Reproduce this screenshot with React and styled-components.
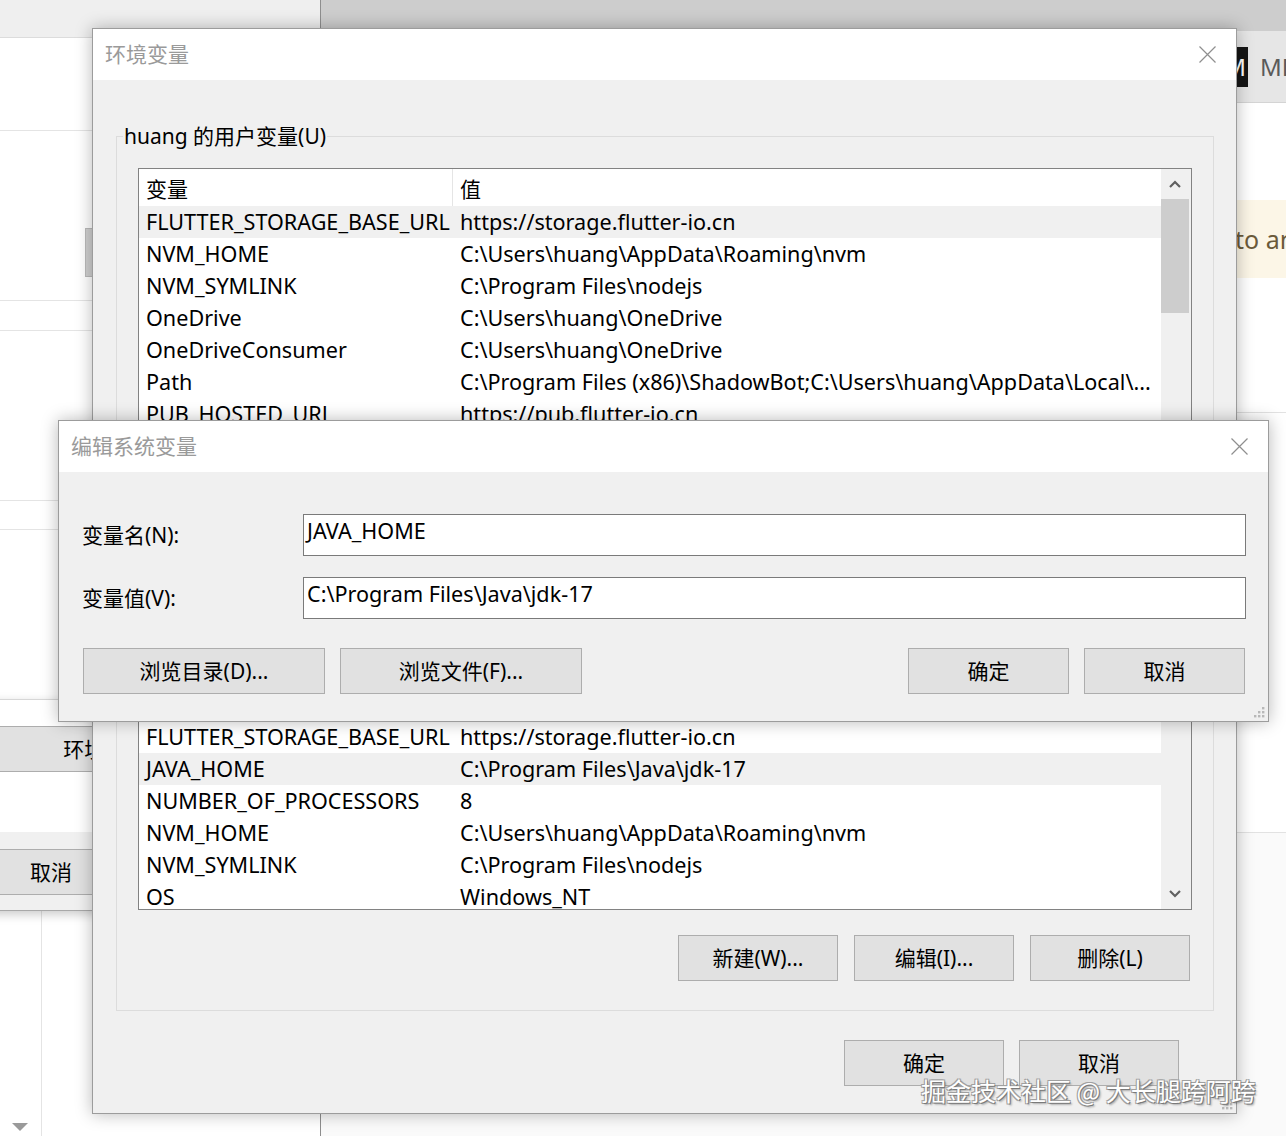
import React from 'react';
import styled, { createGlobalStyle } from 'styled-components';

const GlobalStyle = createGlobalStyle`
  html, body {
    margin: 0;
    padding: 0;
  }
  body {
    background: #fff;
    font-family: "Noto Sans", "Noto Sans CJK SC", sans-serif;
  }
  #root {
    width: 1286px;
    height: 1136px;
  }
`;

const UI_FONT = `"Noto Sans", "Noto Sans CJK SC", sans-serif`;

const Desktop = styled.div`
  position: relative;
  width: 1286px;
  height: 1136px;
  overflow: hidden;
  background: #fff;
  font-family: ${UI_FONT};
`;

/* ---------- background: left app ---------- */

const LeftApp = styled.div`
  position: absolute;
  left: 0;
  top: 0;
  width: 320px;
  height: 1136px;
  background: #fff;
  border-right: 1px solid #8e8e8e;
  display: flex;
  flex-direction: column;
`;

const LeftTopBar = styled.div`
  height: 37px;
  background: #efefef;
  border-bottom: 1px solid #dcdcdc;
`;

const LeftRow = styled.div`
  height: ${(p) => p.$h}px;
  border-bottom: 1px solid #e4e4e4;
`;

const LeftScrollThumb = styled.div`
  position: absolute;
  left: 85px;
  top: 228px;
  width: 6px;
  height: 47px;
  background: #cfcfcf;
  border: 1px solid #b9b9b9;
`;

const LeftFooter = styled.div`
  flex: 1;
  display: flex;
`;

const LeftGutter = styled.div`
  width: 41px;
  display: flex;
  align-items: flex-end;
  justify-content: center;
  padding-bottom: 5px;
  box-sizing: border-box;
`;

const LeftTree = styled.div`
  flex: 1;
  border-left: 1px solid #e4e4e4;
`;

const DownTriangle = styled.div`
  width: 0;
  height: 0;
  border-left: 8px solid transparent;
  border-right: 8px solid transparent;
  border-top: 8px solid #9a9a9a;
  margin-left: -2px;
`;

/* ---------- background: right app ---------- */

const RightApp = styled.div`
  position: absolute;
  left: 321px;
  top: 0;
  width: 965px;
  height: 1136px;
  display: flex;
  flex-direction: column;
  background: #fafafa;
`;

const RightTopBar = styled.div`
  height: 31px;
  background: #cdcdcd;
`;

const RightHeader = styled.div`
  height: 71px;
  background: #e6e6e6;
  border-bottom: 1px solid #d4d4d4;
  display: flex;
  align-items: center;
  padding-left: 897px;
  gap: 12px;
  overflow: hidden;
`;

const MdBadge = styled.div`
  flex: none;
  width: 30px;
  height: 40px;
  background: #151515;
  color: #fff;
  font-size: 24px;
  line-height: 40px;
  text-align: right;
  padding-right: 2px;
  box-sizing: border-box;
  overflow: hidden;
`;

const MdLabel = styled.div`
  flex: none;
  font-size: 24px;
  color: #5a5a5a;
  white-space: nowrap;
`;

const RightBlank = styled.div`
  height: ${(p) => p.$h}px;
  background: #fff;
  border-bottom: ${(p) => (p.$line ? '1px solid #e2e2e2' : 'none')};
`;

const Notice = styled.div`
  height: 78px;
  background: #fcf6e7;
  color: #6b5a3a;
  font-size: 25px;
  display: flex;
  align-items: center;
  padding-left: 914px;
  white-space: nowrap;
  overflow: hidden;
`;

/* ---------- background: system properties window ---------- */

const SysWindow = styled.div`
  position: absolute;
  left: -300px;
  top: 700px;
  width: 600px;
  height: 211px;
  border: 1px solid #a8a8a8;
  border-top: none;
  box-shadow: 0 3px 10px rgba(0, 0, 0, 0.22);
  display: flex;
  flex-direction: column;
  box-sizing: border-box;
`;

const SysPage = styled.div`
  height: 132px;
  background: #fff;
  padding: 26px 0 0 277px;
  box-sizing: border-box;
`;

const SysFooter = styled.div`
  flex: 1;
  background: #f0f0f0;
  padding: 17px 0 0 270px;
`;

/* ---------- shared window parts ---------- */

const Dialog = styled.div`
  position: absolute;
  left: ${(p) => p.$x}px;
  top: ${(p) => p.$y}px;
  width: ${(p) => p.$w}px;
  box-sizing: border-box;
  border: 1px solid #9c9c9c;
  background: #f0f0f0;
  box-shadow: 0 0 16px rgba(0, 0, 0, 0.28);
  display: flex;
  flex-direction: column;
`;

const TitleBar = styled.div`
  height: 51px;
  box-sizing: border-box;
  background: #fff;
  display: flex;
  align-items: center;
  justify-content: space-between;
  padding: 0 20px 4px 12px;
`;

const TitleText = styled.div`
  font-size: 21px;
  color: #9a9a9a;
`;

const CloseBox = styled.div`
  display: flex;
  margin-top: 4px;
`;

const CloseIcon = () => (
  <CloseBox>
    <svg width="17" height="17" viewBox="0 0 17 17">
      <path d="M0.5 0.5 L16.5 16.5 M16.5 0.5 L0.5 16.5" stroke="#8f8f8f" strokeWidth="1.2" fill="none" />
    </svg>
  </CloseBox>
);

const Grip = styled.svg`
  position: absolute;
  right: 3px;
  bottom: 3px;
`;

const GripDots = () => (
  <Grip width="12" height="12" viewBox="0 0 12 12">
    {[
      [9, 1],
      [5, 5],
      [9, 5],
      [1, 9],
      [5, 9],
      [9, 9],
    ].map(([x, y]) => (
      <rect key={`${x}-${y}`} x={x} y={y} width="2.4" height="2.4" fill="#b8b8b8" />
    ))}
  </Grip>
);

const WinButton = styled.button`
  box-sizing: border-box;
  width: ${(p) => p.$w}px;
  height: 46px;
  flex: none;
  background: #e1e1e1;
  border: 1px solid #adadad;
  font-family: ${UI_FONT};
  font-size: 21px;
  color: #000;
  padding: 0 0 2px 0;
  white-space: nowrap;
`;

/* ---------- environment variables dialog ---------- */

const EnvBody = styled.div`
  padding: 40px 22px 27px 23px;
  display: flex;
  flex-direction: column;
`;

const Group = styled.fieldset`
  margin: ${(p) => p.$mt || 0}px 0 0 0;
  padding: 0 8px 29px 8px;
  border: 1px solid #dcdcdc;
  min-width: 0;
`;

const GroupLabel = styled.legend`
  font-size: 21px;
  line-height: 32px;
  padding: 0 1px;
  margin-left: -2px;
  color: #000;
`;

const GroupInner = styled.div`
  margin: 16px 13px 0 13px;
  display: flex;
  flex-direction: column;
`;

const ListView = styled.div`
  height: ${(p) => p.$h}px;
  box-sizing: border-box;
  border: 1px solid #828282;
  background: #fff;
  display: flex;
  overflow: hidden;
`;

const ListColumns = styled.div`
  flex: 1;
  display: flex;
  flex-direction: column;
  overflow: hidden;
`;

const ListHeader = styled.div`
  height: 37px;
  flex: none;
  display: flex;
  align-items: center;
`;

const HeadCell = styled.div`
  box-sizing: border-box;
  height: 100%;
  display: flex;
  align-items: center;
  padding-left: 7px;
  font-size: 21px;
  ${(p) => (p.$name ? 'width: 314px; border-right: 1px solid #e5e5e5;' : 'flex: 1;')}
`;

const ListRow = styled.div`
  height: 32px;
  box-sizing: border-box;
  padding-bottom: 2px;
  flex: none;
  display: flex;
  align-items: center;
  background: ${(p) => (p.$selected ? '#f0f0f0' : '#fff')};
  font-size: 21.6px;
  color: #000;
  white-space: nowrap;
`;

const Cell = styled.div`
  box-sizing: border-box;
  padding-left: 7px;
  overflow: hidden;
  ${(p) => (p.$name ? 'width: 314px; flex: none;' : 'flex: 1;')}
`;

const ScrollBar = styled.div`
  width: 30px;
  flex: none;
  background: #f0f0f0;
  display: flex;
  flex-direction: column;
  align-items: flex-start;
`;

const ScrollArrow = styled.div`
  height: 30px;
  width: 28px;
  display: flex;
  align-items: center;
  justify-content: center;
  flex: none;
`;

const ScrollThumb = styled.div`
  width: 28px;
  height: ${(p) => p.$h}px;
  background: #cdcdcd;
  flex: none;
`;

const ScrollFill = styled.div`
  flex: 1;
`;

const Chevron = ({ dir }) => (
  <svg width="12" height="8" viewBox="0 0 12 8">
    <path
      d={dir === 'up' ? 'M1 7 L6 2 L11 7' : 'M1 1 L6 6 L11 1'}
      stroke="#606060"
      strokeWidth="2.2"
      fill="none"
    />
  </svg>
);

const ButtonRow = styled.div`
  display: flex;
  justify-content: flex-end;
  gap: ${(p) => p.$gap}px;
  margin: ${(p) => p.$mt}px ${(p) => p.$mr}px 0 0;
`;

/* ---------- edit dialog ---------- */

const EditBody = styled.div`
  padding: 42px 23px 27px 24px;
  display: flex;
  flex-direction: column;
`;

const FieldGrid = styled.div`
  display: grid;
  grid-template-columns: 220px 1fr;
  row-gap: 21px;
  align-items: center;
`;

const FieldLabel = styled.div`
  font-size: 21px;
  color: #000;
  margin-left: -1px;
  padding-bottom: 2px;
`;

const TextBox = styled.div`
  height: 42px;
  box-sizing: border-box;
  border: 1px solid #7a7a7a;
  background: #fff;
  padding: 1px 4px 0 3px;
  margin-right: -1px;
  font-size: 21.6px;
  line-height: 30px;
  color: #000;
  white-space: nowrap;
`;

const EditButtons = styled.div`
  display: flex;
  gap: 15px;
  margin-top: 29px;
`;

const Spacer = styled.div`
  flex: 1;
`;

const Watermark = styled.div`
  position: absolute;
  left: 921px;
  top: 1072px;
  font-family: "Noto Sans CJK SC", sans-serif;
  font-size: 25px;
  color: #fff;
  white-space: nowrap;
  text-shadow: 1px 1px 0 #7a7a7a, -1px -1px 0 #a0a0a0, 1px -1px 0 #a0a0a0, -1px 1px 0 #a0a0a0,
    2px 2px 2px rgba(0, 0, 0, 0.3);
`;

const userVars = [
  ['FLUTTER_STORAGE_BASE_URL', 'https://storage.flutter-io.cn', true],
  ['NVM_HOME', 'C:\\Users\\huang\\AppData\\Roaming\\nvm'],
  ['NVM_SYMLINK', 'C:\\Program Files\\nodejs'],
  ['OneDrive', 'C:\\Users\\huang\\OneDrive'],
  ['OneDriveConsumer', 'C:\\Users\\huang\\OneDrive'],
  ['Path', 'C:\\Program Files (x86)\\ShadowBot;C:\\Users\\huang\\AppData\\Local\\...'],
  ['PUB_HOSTED_URL', 'https://pub.flutter-io.cn'],
  ['TEMP', 'C:\\Users\\huang\\AppData\\Local\\Temp'],
  ['TMP', 'C:\\Users\\huang\\AppData\\Local\\Temp'],
];

const systemVars = [
  ['FLUTTER_STORAGE_BASE_URL', 'https://storage.flutter-io.cn'],
  ['JAVA_HOME', 'C:\\Program Files\\Java\\jdk-17', true],
  ['NUMBER_OF_PROCESSORS', '8'],
  ['NVM_HOME', 'C:\\Users\\huang\\AppData\\Roaming\\nvm'],
  ['NVM_SYMLINK', 'C:\\Program Files\\nodejs'],
  ['OS', 'Windows_NT'],
  ['Path', 'C:\\Windows\\system32;C:\\Windows;C:\\Windows\\System32\\Wbem;...'],
];

function VarList({ height, rows, thumb }) {
  return (
    <ListView $h={height}>
      <ListColumns>
        <ListHeader>
          <HeadCell $name>变量</HeadCell>
          <HeadCell>值</HeadCell>
        </ListHeader>
        {rows.map(([name, value, selected]) => (
          <ListRow key={name} $selected={selected}>
            <Cell $name>{name}</Cell>
            <Cell>{value}</Cell>
          </ListRow>
        ))}
      </ListColumns>
      <ScrollBar>
        {thumb === 'top' ? (
          <>
            <ScrollArrow>
              <Chevron dir="up" />
            </ScrollArrow>
            <ScrollThumb $h={114} />
            <ScrollFill />
          </>
        ) : (
          <>
            <ScrollFill />
            <ScrollArrow>
              <Chevron dir="down" />
            </ScrollArrow>
          </>
        )}
      </ScrollBar>
    </ListView>
  );
}

export default function App() {
  return (
    <Desktop>
      <GlobalStyle />

      <LeftApp>
        <LeftTopBar />
        <LeftRow $h={92} />
        <LeftRow $h={169} />
        <LeftRow $h={29} />
        <LeftRow $h={169} />
        <LeftRow $h={28} />
        <LeftRow $h={169} />
        <LeftFooter>
          <LeftGutter>
            <DownTriangle />
          </LeftGutter>
          <LeftTree />
        </LeftFooter>
        <LeftScrollThumb />
      </LeftApp>

      <RightApp>
        <RightTopBar />
        <RightHeader>
          <MdBadge>M</MdBadge>
          <MdLabel>MD</MdLabel>
        </RightHeader>
        <RightBlank $h={97} />
        <Notice>to another editor mode</Notice>
        <RightBlank $h={134} $line />
        <RightBlank $h={419} $line />
      </RightApp>

      <SysWindow>
        <SysPage>
          <WinButton $w={300}>环境变量(N)...</WinButton>
        </SysPage>
        <SysFooter>
          <WinButton $w={160}>取消</WinButton>
        </SysFooter>
      </SysWindow>

      <Dialog $x={92} $y={28} $w={1145}>
        <TitleBar>
          <TitleText>环境变量</TitleText>
          <CloseIcon />
        </TitleBar>
        <EnvBody>
          <Group>
            <GroupLabel>huang 的用户变量(U)</GroupLabel>
            <GroupInner>
              <VarList height={355} rows={userVars} thumb="top" />
              <ButtonRow $gap={16} $mt={25} $mr={2}>
                <WinButton $w={160}>新建(N)...</WinButton>
                <WinButton $w={160}>编辑(E)...</WinButton>
                <WinButton $w={160}>删除(D)</WinButton>
              </ButtonRow>
            </GroupInner>
          </Group>
          <Group $mt={11}>
            <GroupLabel>系统变量(S)</GroupLabel>
            <GroupInner>
              <VarList height={227} rows={systemVars} thumb="bottom" />
              <ButtonRow $gap={16} $mt={25} $mr={2}>
                <WinButton $w={160}>新建(W)...</WinButton>
                <WinButton $w={160}>编辑(I)...</WinButton>
                <WinButton $w={160}>删除(L)</WinButton>
              </ButtonRow>
            </GroupInner>
          </Group>
          <ButtonRow $gap={15} $mt={29} $mr={35}>
            <WinButton $w={160}>确定</WinButton>
            <WinButton $w={160}>取消</WinButton>
          </ButtonRow>
        </EnvBody>
        <GripDots />
      </Dialog>

      <Dialog $x={58} $y={420} $w={1211}>
        <TitleBar>
          <TitleText>编辑系统变量</TitleText>
          <CloseIcon />
        </TitleBar>
        <EditBody>
          <FieldGrid>
            <FieldLabel>变量名(N):</FieldLabel>
            <TextBox>JAVA_HOME</TextBox>
            <FieldLabel>变量值(V):</FieldLabel>
            <TextBox>C:\Program Files\Java\jdk-17</TextBox>
          </FieldGrid>
          <EditButtons>
            <WinButton $w={242}>浏览目录(D)...</WinButton>
            <WinButton $w={242}>浏览文件(F)...</WinButton>
            <Spacer />
            <WinButton $w={161}>确定</WinButton>
            <WinButton $w={161}>取消</WinButton>
          </EditButtons>
        </EditBody>
        <GripDots />
      </Dialog>

      <Watermark>掘金技术社区 @ 大长腿跨阿跨</Watermark>
    </Desktop>
  );
}
